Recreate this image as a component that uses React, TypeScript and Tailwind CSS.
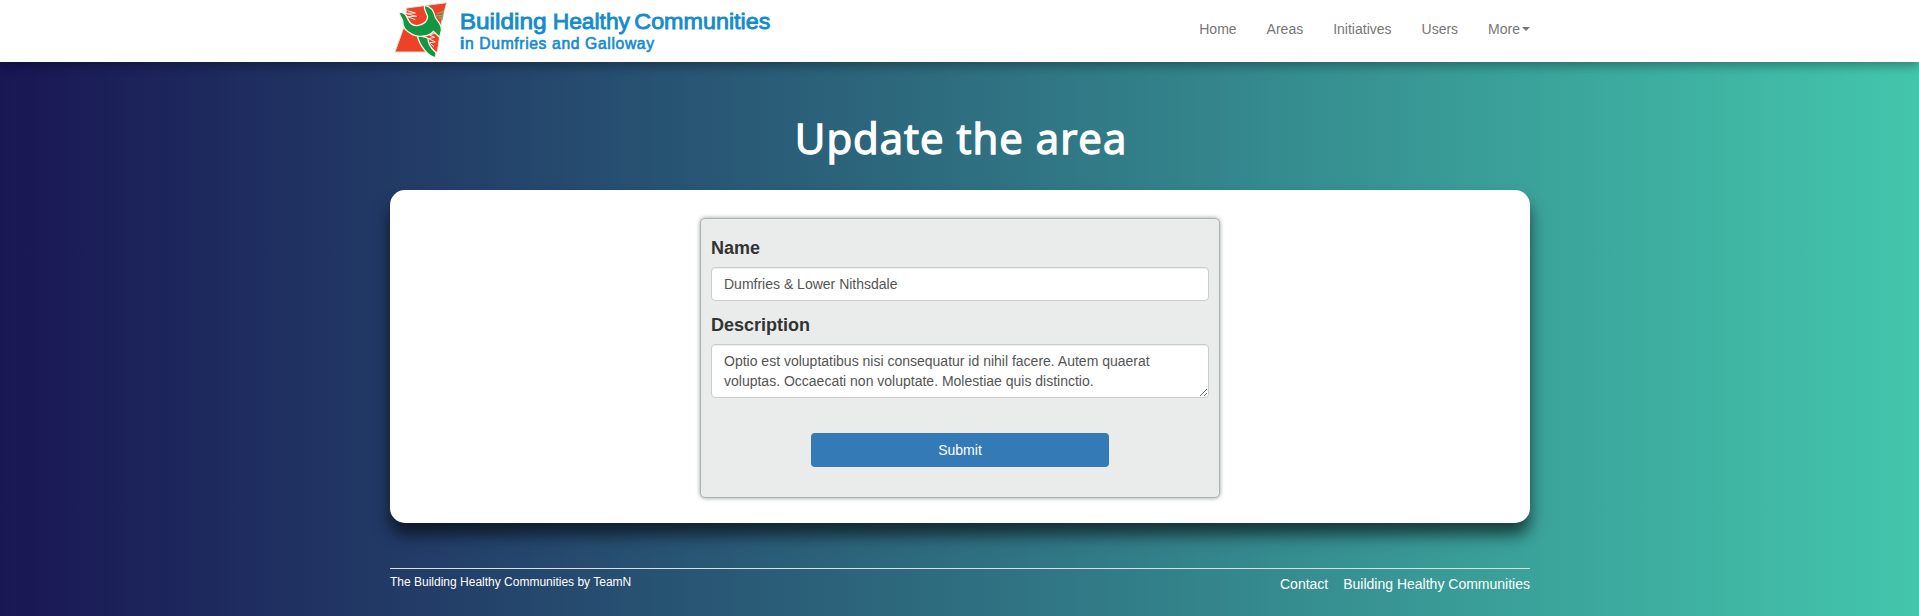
import React from "react";

const navItems = ["Home", "Areas", "Initiatives", "Users"];

function Logo() {
  return (
    <svg width="400" height="62" viewBox="0 0 1200 186" role="img" className="block">
      <path d="M80 24 L200 8 L186 60 L172 156 L45 156 L72 80 Z" fill="#ee4228" stroke="#dfe3cf" strokeWidth="3" />
      <path d="M82 32 L106 39 L76 40 L110 49 L82 50 L106 59 M170 98 L148 105 L164 112 L146 116 L166 126 L148 128 L162 140" fill="none" stroke="#fbe9dc" strokeWidth="3" />
      <path d="M170 42 L190 34 L186 60 M168 48 L186 46 M176 54 L186 54" fill="none" stroke="#7fae6d" strokeWidth="4" />
      <path d="M112 106 C124 112 138 108 144 116 C144 138 158 148 168 158 L167 173 C146 170 118 138 112 106 Z" fill="#119643" stroke="#f4f7e6" strokeWidth="4" />
      <path d="M57 38 C68 34 80 44 84 58 C90 70 98 78 112 77 C130 74 142 64 143 50 C140 38 130 28 134 16 C154 20 162 34 165 50 C168 62 186 68 184 92 L179 112 L160 94 C150 108 118 114 98 104 C78 94 68 84 68 62 C66 54 60 50 57 38 Z" fill="#119643" stroke="#f4f7e6" strokeWidth="4" />
      <g fill="#148bcb" stroke="#148bcb" fontFamily="Liberation Sans, Arial, sans-serif">
        <g fontSize="68" strokeWidth="2.6">
          <text x="239" y="87" textLength="261" lengthAdjust="spacingAndGlyphs">Building</text>
          <text x="518" y="87" textLength="232" lengthAdjust="spacingAndGlyphs">Healthy</text>
          <text x="763" y="87" textLength="408" lengthAdjust="spacingAndGlyphs">Communities</text>
        </g>
        <text x="240" y="147" fontSize="47" strokeWidth="1.8" textLength="582" lengthAdjust="spacing"><tspan fontWeight="bold">i</tspan>n Dumfries and Galloway</text>
      </g>
    </svg>
  );
}

export default function App() {
  return (
    <div className="flex h-[616px] flex-col overflow-hidden bg-[linear-gradient(to_right,#191654,#43c6ac)] font-['Liberation_Sans',Arial,sans-serif] text-sm leading-5 text-[#333]">
      <header className="h-[62px] shrink-0 bg-white pl-px shadow-[0_4px_8px_0_rgba(0,0,0,0.2),0_6px_10px_0_rgba(0,0,0,0.1)]">
        <div className="mx-auto flex w-[1140px] justify-between">
          <a href="#" className="-ml-2.5"><Logo /></a>
          <nav className="flex items-start gap-[30px] pt-[19px] text-[#777]">
            {navItems.map((n) => <a href="#" key={n}>{n}</a>)}
            <a href="#" className="flex items-center">
              More
              <span className="ml-0.5 inline-block border-x-4 border-t-4 border-x-transparent border-t-[#777]" />
            </a>
          </nav>
        </div>
      </header>
      <div className="pl-px">
        <main className="mx-auto w-[1140px]">
          <h1 className="pt-[45px] pl-0.5 text-center font-['Open_Sans',sans-serif] text-[42px] leading-[62px] font-normal tracking-[1px] text-white [-webkit-text-stroke:1.4px_white]">Update the area</h1>
          <section className="mt-[21px] h-[333px] rounded-[15px] bg-white pt-7 shadow-[0_12px_16px_0_rgba(0,0,0,0.6)]">
            <form className="mx-auto h-[280px] w-[520px] rounded-[5px] border border-[#acb5b5] bg-[#eaecec] px-2.5 pt-4 shadow-[0_0_4px_0_rgba(0,0,0,0.4)]">
              <label className="block text-lg leading-[26px] font-bold">Name</label>
              <input defaultValue="Dumfries & Lower Nithsdale" className="mt-1.5 block h-[34px] w-full rounded border border-[#ccc] bg-white px-3 py-1.5 text-[#555] shadow-[inset_0_1px_1px_rgba(0,0,0,0.075)]" />
              <label className="mt-[11px] block text-lg leading-[26px] font-bold">Description</label>
              <textarea defaultValue="Optio est voluptatibus nisi consequatur id nihil facere. Autem quaerat voluptas. Occaecati non voluptate. Molestiae quis distinctio." className="mt-1.5 block h-[54px] w-full resize overflow-auto rounded border border-[#ccc] bg-white px-3 py-1.5 text-[#555] shadow-[inset_0_1px_1px_rgba(0,0,0,0.075)]" />
              <button type="button" className="mx-auto mt-[35px] block h-[34px] w-[298px] rounded bg-[#337ab7] text-white">Submit</button>
            </form>
          </section>
        </main>
        <footer className="mx-auto mt-[45px] flex w-[1140px] justify-between border-t border-[#ddd] text-white">
          <small className="pt-[3px] text-xs leading-5">The Building Healthy Communities by TeamN</small>
          <nav className="flex gap-[15px] pt-[5px]"><a href="#">Contact</a><a href="#">Building Healthy Communities</a></nav>
        </footer>
      </div>
    </div>
  );
}
